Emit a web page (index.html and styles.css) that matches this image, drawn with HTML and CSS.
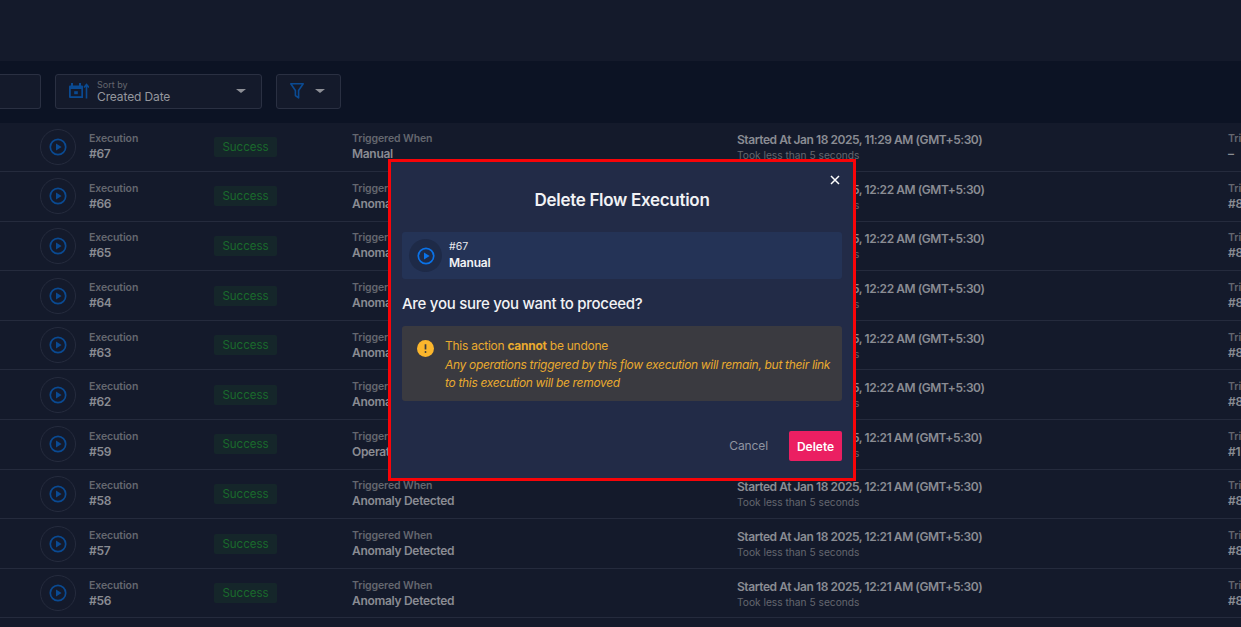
FILE: index.html
```html
<!DOCTYPE html>
<html lang="en">
<head>
<meta charset="utf-8">
<title>Flow Executions</title>
<link rel="stylesheet" href="styles.css">
</head>
<body>
<svg class="defs" width="0" height="0" aria-hidden="true">
  <symbol id="play" viewBox="0 0 18 18">
    <circle cx="9" cy="9" r="7.7" fill="none" stroke="currentColor" stroke-width="1.7"/>
    <path d="M7 5.4v7.2l5.6-3.6z" fill="currentColor"/>
  </symbol>
</svg>
<div class="page">
  <header class="top"></header>
  <section class="toolbar">
    <div class="search"></div>
    <div class="sort">
      <svg class="sort-icon" width="20" height="16" viewBox="0 0 20 16">
        <path d="M1 2.500h12a1 1 0 0 1 1 1V15H1a1 1 0 0 1-1-1V3.500a1 1 0 0 1 1-1z" fill="#0a4a92"/>
        <path d="M3 0v3.500M11 0v3.500" stroke="#0a4a92" stroke-width="2" fill="none"/>
        <rect x="1.800" y="6" width="10.500" height="7.200" fill="#141a2b"/>
        <rect x="5.200" y="8.200" width="3.600" height="3" fill="#0a4a92"/>
        <path d="M17.500 15.500V2M15 4.500l2.500-3 2.500 3" stroke="#0a4a92" stroke-width="1.600" fill="none"/>
      </svg>
      <div class="sort-text">
        <span class="sort-label">Sort by</span>
        <span class="sort-value">Created Date</span>
      </div>
      <span class="caret"></span>
    </div>
    <div class="filter">
      <svg width="14" height="16" viewBox="0 0 14 16"><path d="M.8.800h12.400L8.600 7.500v7.400L5.400 12.500v-5z" fill="none" stroke="#0a4a92" stroke-width="1.600" stroke-linejoin="round"/></svg>
      <span class="caret"></span>
    </div>
  </section>
  <main class="rows">
    <div class="row"><span class="badge-ic"><svg width="18" height="18"><use href="#play"/></svg></span><div class="exec"><span class="lab">Execution</span><span class="val">#67</span></div><span class="status">Success</span><div class="trig"><span class="lab">Triggered When</span><span class="val">Manual</span></div><div class="time"><span class="start">Started At Jan 18 2025, 11:29 AM (GMT+5:30)</span><span class="took">Took less than 5 seconds</span></div><div class="by"><span class="lab">Triggered By</span><span class="val">–</span></div></div>
    <div class="row"><span class="badge-ic"><svg width="18" height="18"><use href="#play"/></svg></span><div class="exec"><span class="lab">Execution</span><span class="val">#66</span></div><span class="status">Success</span><div class="trig"><span class="lab">Triggered When</span><span class="val">Anomaly Detected</span></div><div class="time"><span class="start">Started At Jan 18 2025, 12:22 AM (GMT+5:30)</span><span class="took">Took less than 5 seconds</span></div><div class="by"><span class="lab">Triggered By</span><span class="val">#8</span></div></div>
    <div class="row"><span class="badge-ic"><svg width="18" height="18"><use href="#play"/></svg></span><div class="exec"><span class="lab">Execution</span><span class="val">#65</span></div><span class="status">Success</span><div class="trig"><span class="lab">Triggered When</span><span class="val">Anomaly Detected</span></div><div class="time"><span class="start">Started At Jan 18 2025, 12:22 AM (GMT+5:30)</span><span class="took">Took less than 5 seconds</span></div><div class="by"><span class="lab">Triggered By</span><span class="val">#8</span></div></div>
    <div class="row"><span class="badge-ic"><svg width="18" height="18"><use href="#play"/></svg></span><div class="exec"><span class="lab">Execution</span><span class="val">#64</span></div><span class="status">Success</span><div class="trig"><span class="lab">Triggered When</span><span class="val">Anomaly Detected</span></div><div class="time"><span class="start">Started At Jan 18 2025, 12:22 AM (GMT+5:30)</span><span class="took">Took less than 5 seconds</span></div><div class="by"><span class="lab">Triggered By</span><span class="val">#8</span></div></div>
    <div class="row"><span class="badge-ic"><svg width="18" height="18"><use href="#play"/></svg></span><div class="exec"><span class="lab">Execution</span><span class="val">#63</span></div><span class="status">Success</span><div class="trig"><span class="lab">Triggered When</span><span class="val">Anomaly Detected</span></div><div class="time"><span class="start">Started At Jan 18 2025, 12:22 AM (GMT+5:30)</span><span class="took">Took less than 5 seconds</span></div><div class="by"><span class="lab">Triggered By</span><span class="val">#8</span></div></div>
    <div class="row"><span class="badge-ic"><svg width="18" height="18"><use href="#play"/></svg></span><div class="exec"><span class="lab">Execution</span><span class="val">#62</span></div><span class="status">Success</span><div class="trig"><span class="lab">Triggered When</span><span class="val">Anomaly Detected</span></div><div class="time"><span class="start">Started At Jan 18 2025, 12:22 AM (GMT+5:30)</span><span class="took">Took less than 5 seconds</span></div><div class="by"><span class="lab">Triggered By</span><span class="val">#8</span></div></div>
    <div class="row"><span class="badge-ic"><svg width="18" height="18"><use href="#play"/></svg></span><div class="exec"><span class="lab">Execution</span><span class="val">#59</span></div><span class="status">Success</span><div class="trig"><span class="lab">Triggered When</span><span class="val">Operation Completed</span></div><div class="time"><span class="start">Started At Jan 18 2025, 12:21 AM (GMT+5:30)</span><span class="took">Took less than 5 seconds</span></div><div class="by"><span class="lab">Triggered By</span><span class="val">#1</span></div></div>
    <div class="row"><span class="badge-ic"><svg width="18" height="18"><use href="#play"/></svg></span><div class="exec"><span class="lab">Execution</span><span class="val">#58</span></div><span class="status">Success</span><div class="trig"><span class="lab">Triggered When</span><span class="val">Anomaly Detected</span></div><div class="time"><span class="start">Started At Jan 18 2025, 12:21 AM (GMT+5:30)</span><span class="took">Took less than 5 seconds</span></div><div class="by"><span class="lab">Triggered By</span><span class="val">#8</span></div></div>
    <div class="row"><span class="badge-ic"><svg width="18" height="18"><use href="#play"/></svg></span><div class="exec"><span class="lab">Execution</span><span class="val">#57</span></div><span class="status">Success</span><div class="trig"><span class="lab">Triggered When</span><span class="val">Anomaly Detected</span></div><div class="time"><span class="start">Started At Jan 18 2025, 12:21 AM (GMT+5:30)</span><span class="took">Took less than 5 seconds</span></div><div class="by"><span class="lab">Triggered By</span><span class="val">#8</span></div></div>
    <div class="row"><span class="badge-ic"><svg width="18" height="18"><use href="#play"/></svg></span><div class="exec"><span class="lab">Execution</span><span class="val">#56</span></div><span class="status">Success</span><div class="trig"><span class="lab">Triggered When</span><span class="val">Anomaly Detected</span></div><div class="time"><span class="start">Started At Jan 18 2025, 12:21 AM (GMT+5:30)</span><span class="took">Took less than 5 seconds</span></div><div class="by"><span class="lab">Triggered By</span><span class="val">#8</span></div></div>
  </main>
</div>
<div class="modal" role="dialog">
  <button class="close" aria-label="Close">
    <svg width="10" height="10" viewBox="0 0 10 10"><path d="M1 1l8 8M9 1l-8 8" stroke="#fff" stroke-width="1.500" fill="none"/></svg>
  </button>
  <h2 class="title">Delete Flow Execution</h2>
  <div class="item">
    <span class="item-ic"><svg width="18" height="18"><use href="#play"/></svg></span>
    <div class="item-text"><span class="item-id">#67</span><span class="item-name">Manual</span></div>
  </div>
  <p class="question">Are you sure you want to proceed?</p>
  <div class="warn">
    <svg class="warn-ic" width="17" height="17" viewBox="0 0 18 18"><circle cx="9" cy="9" r="9" fill="#fbb62c"/><path d="M9 4.500v5.500" stroke="#3a3a40" stroke-width="1.800"/><circle cx="9" cy="12.700" r="1" fill="#3a3a40"/></svg>
    <div class="warn-text">
      <p class="warn-main">This action <b>cannot</b> be undone</p>
      <p class="warn-note">Any operations triggered by this flow execution will remain, but their link to this execution will be removed</p>
    </div>
  </div>
  <div class="actions">
    <button class="cancel">Cancel</button>
    <button class="delete">Delete</button>
  </div>
</div>
</body>
</html>
```
FILE: styles.css
```css
* { box-sizing: border-box; }
html, body { margin: 0; height: 100%; overflow: hidden; }
body { background: #141a2b; font-family: Inter, "Liberation Sans", sans-serif; color: #94969d; position: relative; }
.defs { position: absolute; }
.page { display: flex; flex-direction: column; height: 627px; overflow: hidden; }
.top { height: 61px; flex: none; }
.toolbar { height: 61.500px; flex: none; background: #0c1324; display: flex; align-items: center; gap: 14px; padding-bottom: 1px; }
.search { width: 41px; height: 35px; border: 1px solid #2a3042; border-left: 0; border-radius: 0 3px 3px 0; background: #141a2b; }
.sort { width: 207px; height: 35px; border: 1px solid #2a3042; border-radius: 3px; background: #141a2b; display: flex; align-items: center; padding: 0 15px 0 13px; }
.sort-icon { flex: none; margin-right: 8px; }
.sort-text { flex: 1; display: flex; flex-direction: column; }
.sort-label { font-size: 9px; line-height: 11px; color: #64676f; position: relative; top: 1px; }
.sort-value { font-size: 12px; line-height: 15px; letter-spacing: -0.120px; color: #94969d; }
.caret { width: 0; height: 0; border: 5px solid transparent; border-top: 4px solid #8d8f96; border-bottom: 0; flex: none; }
.filter { width: 65px; height: 35px; border: 1px solid #2a3042; border-radius: 3px; background: #141a2b; display: flex; align-items: center; gap: 11px; padding-left: 13px; }
.rows { display: flex; flex-direction: column; flex: none; }
.row { height: 49.600px; flex: none; border-bottom: 1px solid #252b3d; display: flex; align-items: center; padding-left: 40px; white-space: nowrap; }
.badge-ic { width: 36px; height: 36px; border-radius: 50%; border: 1px solid #252b3d; display: flex; align-items: center; justify-content: center; color: #0a4a92; flex: none; }
.exec { width: 125px; margin-left: 13px; flex: none; display: flex; flex-direction: column; }
.status { width: 63px; height: 20px; border-radius: 2px; background: #15262a; color: #1a6a2c; font-size: 11.500px; line-height: 20px; text-align: center; flex: none; }
.trig { width: 385px; margin-left: 75px; flex: none; display: flex; flex-direction: column; }
.time { width: 491px; flex: none; display: flex; flex-direction: column; }
.by { flex: none; display: flex; flex-direction: column; }
.lab { font-size: 10.500px; line-height: 15px; font-weight: 600; color: #64676f; letter-spacing: -0.100px; }
.val { font-size: 12px; line-height: 16px; font-weight: 600; color: #8a8c93; letter-spacing: -0.300px; }
.start { font-size: 12px; line-height: 17px; font-weight: 600; color: #8a8c93; letter-spacing: -0.440px; }
.took { font-size: 10.200px; line-height: 14px; color: #64676f; }
.modal { position: absolute; left: 388px; top: 159px; width: 468px; height: 322px; background: #222b47; border: 3px solid #f80408; padding: 0 11px; display: flex; flex-direction: column; }
.close { position: absolute; top: 12px; right: 12px; width: 12px; height: 12px; padding: 0; border: 0; background: none; display: flex; align-items: center; justify-content: center; }
.title { margin: 27px 0 0; font-size: 17px; line-height: 22px; font-weight: 600; letter-spacing: -0.300px; color: #f1f2f5; text-align: center; }
.item { margin-top: 21px; height: 47px; border-radius: 3px; background: #243356; display: flex; align-items: center; padding-left: 7px; gap: 7px; }
.item-ic { width: 33px; height: 33px; border-radius: 50%; background: #1e2a47; color: #0a72e8; display: flex; align-items: center; justify-content: center; flex: none; }
.item-text { display: flex; flex-direction: column; }
.item-id { font-size: 10.500px; line-height: 13px; margin-bottom: 2px; color: #e8e9ed; }
.item-name { font-size: 12px; line-height: 16px; font-weight: 600; letter-spacing: -0.200px; color: #f1f2f5; }
.question { margin: 15px 0 0; font-size: 15px; line-height: 20px; font-weight: 500; letter-spacing: -0.280px; color: #f1f2f5; }
.warn { margin-top: 12px; height: 75px; border-radius: 3px; background: #3a3a40; display: flex; align-items: center; padding-left: 15px; gap: 11px; }
.warn-ic { flex: none; align-self: flex-start; margin-top: 14px; }
.warn-text { width: 392px; color: #e9aa2f; font-size: 12px; padding-top: 1px; }
.warn-main { margin: 0 0 2px; line-height: 17px; letter-spacing: -0.260px; }
.warn-main b { font-weight: 700; }
.warn-note { margin: 0; font-style: italic; line-height: 18px; letter-spacing: -0.320px; }
.actions { margin-top: 30px; display: flex; justify-content: flex-end; align-items: center; gap: 21px; }
.cancel { border: 0; background: none; padding: 0 0 2px; font: 12px Inter, "Liberation Sans", sans-serif; letter-spacing: -0.100px; color: #8f93a0; }
.delete { width: 53px; height: 30px; border: 0; border-radius: 2px; background: #eb1f62; color: #fff; font: 600 12px Inter, "Liberation Sans", sans-serif; padding: 0; }
```
